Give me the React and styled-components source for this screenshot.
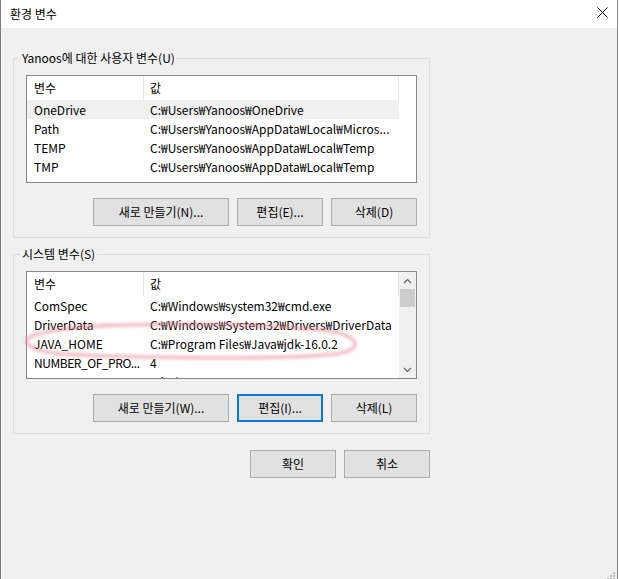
import React from 'react';
import styled, { createGlobalStyle } from 'styled-components';

const FONT = '"Noto Sans CJK KR", "Noto Sans", sans-serif';

const Global = createGlobalStyle`
  html, body { margin: 0; padding: 0; background: #fff; }
  body { font-family: ${FONT}; font-size: 12px; color: #000; }
`;

const Window = styled.div`
  position: relative;
  width: 618px;
  height: 579px;
  box-sizing: border-box;
  border-left: 1px solid #7a7a7a;
  border-right: 1px solid #8a8a8a;
  background: #f0f0f0;
  display: flex;
  flex-direction: column;
  overflow: hidden;
`;

const TitleBar = styled.div`
  height: 28px;
  flex-shrink: 0;
  background: #fff;
  display: flex;
  align-items: flex-start;
  justify-content: space-between;
  padding-left: 9px;
`;

const Title = styled.span`
  font-size: 12px;
  line-height: 16px;
  margin-top: 6px;
`;

const CloseButton = styled.div`
  width: 30px;
  height: 24px;
  display: flex;
  align-items: center;
  justify-content: center;
`;

const Body = styled.div`
  padding: 22px 0 0 12px;
  display: flex;
  flex-direction: column;
`;

const Group = styled.fieldset`
  margin: ${(p) => (p.$first ? '0' : '8px')} 0 0 0;
  padding: 9px 12px 11px;
  border: 1px solid #dcdcdc;
  width: 417px;
  box-sizing: border-box;
  min-width: 0;
`;

const Legend = styled.legend`
  padding: 0 2px;
  margin-left: -6px;
  font-size: 12px;
  line-height: 16px;
`;

const ListView = styled.div`
  width: 391px;
  height: 108px;
  box-sizing: border-box;
  border: 1px solid #828790;
  background: #fff;
  display: flex;
  overflow: hidden;
`;

const ListMain = styled.div`
  flex: 1;
  display: flex;
  flex-direction: column;
  overflow: hidden;
`;

const HeaderRow = styled.div`
  display: flex;
  height: 24px;
  flex-shrink: 0;
`;

const HeaderCell = styled.div`
  width: ${(p) => p.$w}px;
  box-sizing: border-box;
  padding-left: ${(p) => p.$pad}px;
  border-right: 1px solid #e5e5e5;
  display: flex;
  align-items: center;
  line-height: 16px;
`;

const Row = styled.div`
  display: flex;
  width: 372px;
  height: 19px;
  flex-shrink: 0;
  background: ${(p) => (p.$selected ? '#f0f0f0' : 'transparent')};
`;

const Cell = styled.div`
  width: ${(p) => p.$w}px;
  box-sizing: border-box;
  padding-left: ${(p) => p.$pad}px;
  line-height: 19px;
  white-space: nowrap;
  overflow: hidden;
  letter-spacing: ${(p) => (p.$tight ? '-0.45px' : 'normal')};
`;

const ScrollBar = styled.div`
  width: 17px;
  flex-shrink: 0;
  background: #f0f0f0;
  display: flex;
  flex-direction: column;
`;

const ScrollArrow = styled.div`
  height: 17px;
  flex-shrink: 0;
  display: flex;
  align-items: center;
  justify-content: center;
`;

const ScrollTrack = styled.div`
  flex: 1;
  padding: 0 1px;
`;

const Thumb = styled.div`
  height: 18px;
  background: #cdcdcd;
`;

const ButtonRow = styled.div`
  display: flex;
  justify-content: flex-end;
  gap: 8px;
  margin-top: 15px;
`;

const Button = styled.button`
  width: ${(p) => p.$w}px;
  height: 28px;
  box-sizing: border-box;
  padding: 0;
  background: #e1e1e1;
  border: ${(p) => (p.$focused ? '2px solid #0078d7' : '1px solid #adadad')};
  font-family: ${FONT};
  font-size: 12px;
  color: #000;
  line-height: 16px;
`;

const Footer = styled.div`
  width: 417px;
  display: flex;
  justify-content: flex-end;
  gap: 8px;
  margin-top: 16px;
`;

const Overlay = styled.svg`
  position: absolute;
  left: -1px;
  top: 0;
  pointer-events: none;
`;

const Grip = styled.svg`
  position: absolute;
  right: 1px;
  bottom: 0;
`;

const C1 = 117;
const C2 = 255;

const userVars = [
  ['OneDrive', 'C:₩Users₩Yanoos₩OneDrive'],
  ['Path', 'C:₩Users₩Yanoos₩AppData₩Local₩Micros...'],
  ['TEMP', 'C:₩Users₩Yanoos₩AppData₩Local₩Temp'],
  ['TMP', 'C:₩Users₩Yanoos₩AppData₩Local₩Temp'],
];

const sysVars = [
  ['ComSpec', 'C:₩Windows₩system32₩cmd.exe'],
  ['DriverData', 'C:₩Windows₩System32₩Drivers₩DriverData'],
  ['JAVA_HOME', 'C:₩Program Files₩Java₩jdk-16.0.2'],
  ['NUMBER_OF_PRO...', '4', true],
  ['OS', 'Windows_NT'],
];

function Chevron({ up }) {
  return (
    <svg width="9" height="6" viewBox="0 0 9 6">
      <path
        d={up ? 'M1 5 L4.5 1.5 L8 5' : 'M1 1 L4.5 4.5 L8 1'}
        fill="none"
        stroke="#606060"
        strokeWidth="1.2"
      />
    </svg>
  );
}

function List({ rows, selected, scroll }) {
  return (
    <ListView>
      <ListMain>
        <HeaderRow>
          <HeaderCell $w={C1} $pad={7}>변수</HeaderCell>
          <HeaderCell $w={C2} $pad={6}>값</HeaderCell>
        </HeaderRow>
        {rows.map(([k, v, tight], i) => (
          <Row key={k} $selected={selected === i}>
            <Cell $w={C1} $pad={7} $tight={tight}>{k}</Cell>
            <Cell $w={C2} $pad={6}>{v}</Cell>
          </Row>
        ))}
      </ListMain>
      {scroll && (
        <ScrollBar>
          <ScrollArrow><Chevron up /></ScrollArrow>
          <ScrollTrack><Thumb /></ScrollTrack>
          <ScrollArrow><Chevron /></ScrollArrow>
        </ScrollBar>
      )}
    </ListView>
  );
}

export default function App() {
  return (
    <>
      <Global />
      <Window>
        <TitleBar>
          <Title>환경 변수</Title>
          <CloseButton>
            <svg width="11" height="11" viewBox="0 0 11 11">
              <path d="M0.5 0.5 L10.5 10.5 M10.5 0.5 L0.5 10.5" stroke="#000" strokeWidth="1" />
            </svg>
          </CloseButton>
        </TitleBar>
        <Body>
          <Group $first>
            <Legend>Yanoos에 대한 사용자 변수(U)</Legend>
            <List rows={userVars} selected={0} />
            <ButtonRow>
              <Button $w={136}>새로 만들기(N)...</Button>
              <Button $w={86}>편집(E)...</Button>
              <Button $w={86}>삭제(D)</Button>
            </ButtonRow>
          </Group>
          <Group>
            <Legend>시스템 변수(S)</Legend>
            <List rows={sysVars} scroll />
            <ButtonRow>
              <Button $w={136}>새로 만들기(W)...</Button>
              <Button $w={86} $focused>편집(I)...</Button>
              <Button $w={86}>삭제(L)</Button>
            </ButtonRow>
          </Group>
          <Footer>
            <Button $w={86}>확인</Button>
            <Button $w={86}>취소</Button>
          </Footer>
        </Body>
        <Overlay width="618" height="579" viewBox="0 0 618 579">
          <defs>
            <filter id="soft" x="-10%" y="-50%" width="120%" height="200%">
              <feGaussianBlur stdDeviation="1" />
            </filter>
          </defs>
          <path
            d="M85 327 C 150 322, 270 324, 330 331 C 360 336, 364 350, 336 354 C 280 360, 130 358, 62 354 C 24 350, 18 339, 38 334 C 55 329, 80 327, 110 325"
            fill="none"
            stroke="rgba(235,125,140,0.4)"
            strokeWidth="4.5"
            strokeLinecap="round"
            filter="url(#soft)"
          />
        </Overlay>
        <Grip width="10" height="8" viewBox="0 0 10 8">
          <rect x="7" y="1" width="2" height="2" fill="#b8b8b8" />
          <rect x="4" y="4" width="2" height="2" fill="#b8b8b8" />
          <rect x="7" y="4" width="2" height="2" fill="#b8b8b8" />
          <rect x="1" y="7" width="2" height="2" fill="#b8b8b8" />
          <rect x="4" y="7" width="2" height="2" fill="#b8b8b8" />
          <rect x="7" y="7" width="2" height="2" fill="#b8b8b8" />
        </Grip>
      </Window>
    </>
  );
}
